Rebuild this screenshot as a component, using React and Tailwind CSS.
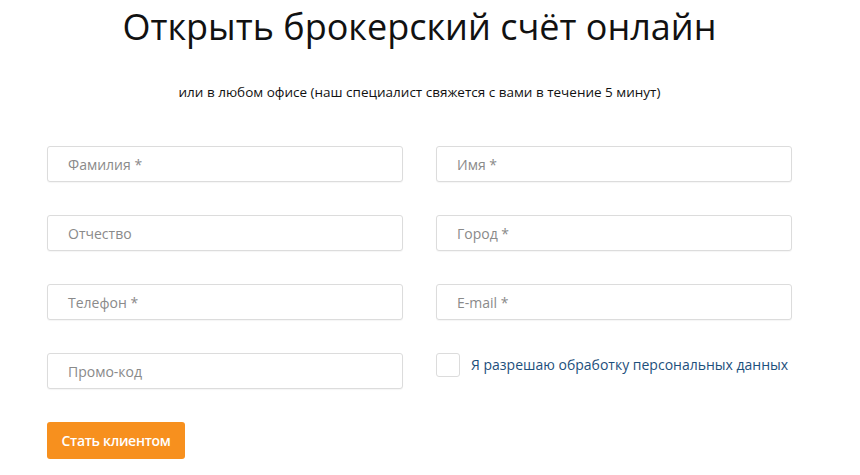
export default function App() {
  const Input = ({ p }) => (
    <div className="h-[36px] border border-[#dcdcdc] rounded-[3px] bg-white flex items-center px-[20px] text-[14px] text-[#8a8a8a] shadow-[0_1px_1px_rgba(0,0,0,0.04)]">{p}</div>
  );
  return (
    <div className="w-[860px] h-[475px] bg-white pl-[47px]" style={{ fontFamily: '"Open Sans", sans-serif' }}>
      <div className="w-[745px]">
        <h1 className="text-[36px] leading-[50px] text-[#111] text-center pt-[2px] font-normal">Открыть брокерский счёт онлайн</h1>
        <p className="text-[13.5px] text-[#111] text-center mt-[30px] leading-[20px]">или в любом офисе (наш специалист свяжется с вами в течение 5 минут)</p>
        <div className="grid grid-cols-2 gap-x-[33px] gap-y-[33px] mt-[44px]">
          <Input p="Фамилия *" />
          <Input p="Имя *" />
          <Input p="Отчество" />
          <Input p="Город *" />
          <Input p="Телефон *" />
          <Input p="E-mail *" />
          <Input p="Промо-код" />
          <div className="flex items-start gap-[11px]">
            <div className="w-[24px] h-[24px] border border-[#dcdcdc] rounded-[3px]"></div>
            <span className="text-[14px] text-[#1d4f7c] leading-[24px]">Я разрешаю обработку персональных данных</span>
          </div>
        </div>
        <button className="mt-[33px] w-[138px] h-[37px] bg-[#f7901e] rounded-[3px] text-white text-[14px] font-semibold tracking-[-0.3px]">Стать клиентом</button>
      </div>
    </div>
  );
}
